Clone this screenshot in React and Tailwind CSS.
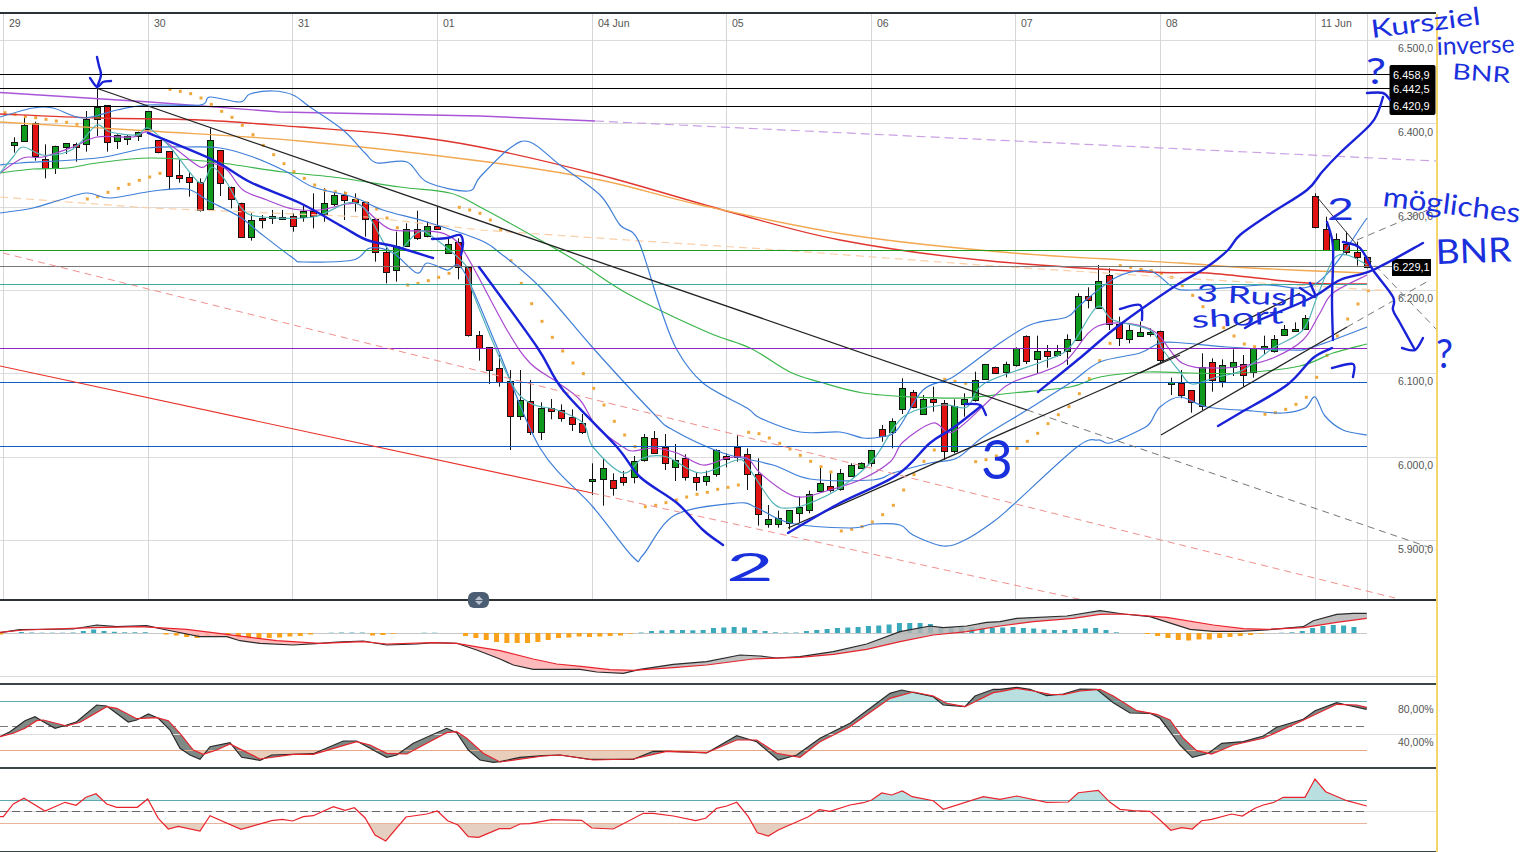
// Chart screen: price panel, MACD, stochastic and RSI panels, with pen annotations on top
const X = (i) => 3.7 + 10.33 * i;

// candles: [zoom x, high, low, body top, body bottom, red?] grouped by the crop origin they were read from
const candleGroups = [
  [0, 0, [
    [41,412,458,427,434,0],[72,345,425,376,422,0],[104,365,482,368,467,1],[135,433,535,477,503,1],[165,437,522,439,503,0],
    [197,430,462,430,440,0],[228,428,485,433,440,1],[258,333,455,358,432,0],[290,265,408,320,358,0],[320,316,455,316,425,1],
    [351,403,447,406,424,0],[382,405,435,409,418,0],[413,395,423,397,407,0],[444,333,392,334,386,0],[475,420,460,421,455,1],
    [507,453,570,454,527,1],[537,480,548,526,533,1],[568,518,590,532,545,1],[600,535,635,547,630,1],[630,385,630,421,628,0],
    [661,450,588,451,550,1],[692,560,625,562,596,1],[723,608,710,610,710,1],[754,640,722,661,712,0],[785,645,685,655,661,1],
    [816,630,672,648,655,0],[847,630,660,651,658,0],[878,640,695,649,677,1],[909,617,665,634,652,0],[940,580,685,634,648,1],
    [971,565,665,610,643,0],[1002,575,618,586,613,0],[1033,575,660,586,601,1],[1064,580,635,597,607,1],[1095,605,710,607,658,1],
    [1126,655,785,658,757,1],[1157,740,850,757,815,1],[1188,695,845,737,811,0],[1219,670,738,686,737,0],[1250,632,720,686,713,1],
    [1281,665,712,677,709,0],[1312,620,690,679,686,1],
  ]],
  [440, 240, [
    [24,-8,40,13,38,0],[54,-5,118,5,82,1],[85,82,290,82,285,1],[117,273,362,286,324,1],[147,322,432,322,389,1],[178,345,440,385,425,1],
    [209,390,630,424,527,1],[240,390,540,481,527,0],[271,420,585,484,575,1],[302,487,600,505,575,0],[333,477,538,505,512,1],
    [363,493,545,511,533,1],[395,508,573,532,551,1],[426,522,582,550,576,1],[457,670,765,718,724,0],[488,655,797,685,718,0],
    [519,700,767,721,743,1],[550,693,737,712,725,1],[581,648,730,664,712,0],[612,582,665,590,660,0],[642,573,642,595,640,1],
    [674,582,690,622,670,1],[705,612,723,660,680,0],[736,643,722,655,712,1],[767,698,752,712,725,1],[798,692,737,709,722,0],
    [828,628,710,631,703,0],[859,640,682,649,656,1],[890,586,665,620,650,1],[921,625,750,643,703,1],[953,655,857,703,821,1],
    [984,795,863,838,851,0],[1015,812,863,835,853,0],[1046,810,868,811,848,0],
  ]],
  [780, 240, [
    [56,770,848,800,818,0],[87,752,820,763,811,0],[119,680,752,730,752,0],[149,700,757,739,749,1],[180,687,752,700,748,0],
    [212,670,710,676,707,0],[242,667,685,668,683,0],[273,630,680,631,668,0],[305,555,605,568,587,1],[336,535,625,544,577,0],
    [367,415,522,445,506,0],[398,450,505,457,502,1],[429,465,525,478,521,0],[459,440,515,478,485,1],[491,480,660,490,632,1],
    [521,478,640,499,632,0],[552,460,530,477,493,0],[585,395,485,421,479,0],[615,372,420,373,418,0],[645,380,400,380,398,1],
    [677,365,412,373,395,0],[708,322,380,323,375,0],[738,286,372,287,364,1],[770,287,400,334,358,0],[801,315,383,332,349,1],
    [831,315,350,332,346,0],[862,283,375,296,334,0],[893,160,302,169,301,0],[924,142,205,169,181,1],[955,75,204,124,203,0],
    [986,85,270,106,253,1],[1017,230,318,253,295,1],[1048,255,310,271,298,0],[1079,245,290,277,287,0],[1110,265,290,277,283,0],
    [1141,272,370,274,361,1],
  ]],
  [1140, 280, [
    [92,293,345,305,310,0],[123,270,355,308,344,1],[154,330,398,331,367,1],[185,220,390,262,377,0],[216,235,335,247,300,1],
    [247,238,322,254,304,0],[278,208,288,247,260,0],[309,225,320,253,284,1],[340,203,293,205,275,0],[371,167,225,197,204,0],
    [402,165,218,178,214,0],[433,135,165,148,165,0],[464,127,155,146,152,0],[495,105,150,115,146,0],
  ]],
  [1140, 0, [
    [526,580,685,587,680,1],[557,650,750,688,750,1],[588,700,750,718,750,0],[619,695,765,733,757,1],[650,725,797,757,772,1],[681,770,805,772,800,1],
  ]],
];

const snap = (v) => Math.round(v) + 0.5;

const candles = candleGroups.flatMap(([ox, oy, rows]) =>
  rows.map(([x, hi, lo, top, bot, red]) => ({
    x: Math.round(ox + x / 3) + 0.5,
    hi: oy + hi / 3,
    lo: oy + lo / 3,
    top: snap(oy + top / 3),
    bot: snap(oy + bot / 3),
    red,
  }))
);

const sar = [
  ...[[15,338],[45,343],[76,350],[107,353],[138,358],[169,363],[200,367],[231,373],[262,597],[293,590],[324,577],[355,565],[387,553],[418,541],[449,531],[480,520],[510,268],[541,274],[572,281],[603,294],[634,313],[665,334],[696,352],[727,376],[759,404],[790,436],[821,464],[852,491],[882,515],[913,535],[944,555],[975,571],[1006,575],[1037,580],[1068,597],[1099,608],[1130,627],[1161,654],[1192,683],[1223,855],[1254,850],[1285,842],[1316,832],[1347,820],[1378,622],[1409,630],[1440,640],[1471,660],[1502,690]].map(([x,y]) => [x/3,y/3]),
  ...[[213,62],[244,130],[275,191],[306,244],[337,292],[368,333],[399,369],[430,401],[461,445],[492,495],[523,544],[554,585],[585,620],[616,800],[647,796],[678,788],[709,780],[740,771],[771,763],[802,757],[833,748],[864,742],[895,735],[926,577],[957,581],[988,594],[1019,610],[1050,627],[1081,646],[1112,664],[1143,680]].map(([x,y]) => [440+x/3,240+y/3]),
  ...[[153,696],[184,873],[215,868],[246,860],[277,846],[308,824],[340,796],[371,750],[402,704],[432,664],[463,630],[494,418],[525,424],[557,430],[587,665],[618,659],[649,648],[680,637],[711,625],[742,604],[773,580],[804,551],[835,524],[867,500],[898,461],[928,416],[959,362],[990,310],[1021,77],[1052,82],[1083,89],[1114,93]].map(([x,y]) => [780+x/3,240+y/3]),
  ...[[3,808],[33,813],[64,820],[95,832],[127,857],[158,886]].map(([x,y]) => [1140+x/3,y/3]),
  ...[[189,80],[220,113],[251,143],[282,168],[313,192],[344,200],[375,403],[406,398],[437,388],[468,373],[499,352],[530,292],[561,226],[592,168],[623,117],[654,72],[685,32]].map(([x,y]) => [1140+x/3,280+y/3]),
];

const curves = {
  red: "0,114 100,118 200,120 300,127 400,135 480,147 600,175 730,212 840,240 980,260 1147,272 1207,273 1307,283 1367,284",
  orange: "0,122 150,131 300,141 480,161 600,180 700,205 850,235 1013,253 1180,263 1250,268 1367,273",
  green: "0,173 33,169 67,168 97,163 150,158 213,162 283,172 333,177 400,187 450,193 480,207 540,240 583,265 630,295 707,332 750,348 790,372 820,382 863,393 913,397 963,398 1013,393 1070,387 1100,377 1147,372 1190,373 1240,373 1300,366 1333,353 1367,344",
  bbUp: "0,117 33,108 53,108 83,118 117,110 147,105 200,105 210,97 240,102 250,94 273,91 293,95 310,107 343,130 365,153 377,163 407,162 427,182 468,191 480,177 510,148 530,142 560,165 600,195 620,225 638,240 660,307 677,350 703,383 747,408 760,418 800,432 840,432 863,438 880,437 897,430 923,390 953,377 993,348 1030,325 1067,317 1080,305 1117,277 1150,271 1173,287 1193,290 1263,285 1317,283 1367,218",
  bbMid: "0,165 20,163 97,158 147,148 187,147 220,148 253,157 287,172 313,187 353,197 383,210 427,222 480,240 500,253 540,287 593,348 653,413 673,430 723,453 773,465 810,479 873,480 893,473 930,463 957,458 983,437 1027,410 1070,383 1100,362 1140,353 1160,343 1183,343 1227,347 1290,350 1313,347 1367,327",
  bbLow: "0,213 33,208 60,200 87,193 110,198 153,191 187,189 207,200 240,217 260,233 293,258 303,262 353,260 370,248 393,253 417,273 427,263 447,270 463,270 497,347 540,448 593,507 633,557 643,555 675,515 737,503 757,508 790,523 850,528 873,524 900,525 913,535 943,546 965,540 993,522 1013,505 1077,447 1098,440 1110,443 1140,430 1150,423 1160,407 1180,397 1207,407 1253,411 1283,413 1305,408 1315,397 1325,416 1343,430 1367,435",
  purple: "0,173 23,158 43,157 73,147 97,137 133,137 148,132 173,147 200,167 210,163 227,170 243,190 267,200 293,209 320,210 347,204 360,205 377,220 393,230 427,231 447,235 465,253 507,330 530,363 557,382 580,400 597,427 623,447 633,451 653,448 677,453 703,465 727,458 747,458 760,473 787,493 803,497 823,492 860,480 890,462 903,442 933,423 953,432 993,397 1013,382 1063,363 1098,326 1150,329 1182,363 1217,368 1243,366 1273,358 1303,340 1320,313 1333,293 1367,275",
  cyan: "0,173 13,157 23,147 43,155 67,152 80,143 97,125 110,132 137,135 148,128 170,147 200,183 212,167 227,183 243,210 263,217 313,217 347,203 363,207 373,223 393,253 417,233 430,235 467,267 473,293 510,380 530,403 557,410 583,423 593,447 623,473 643,458 667,457 700,473 737,460 748,467 773,503 790,508 810,503 840,488 873,460 903,417 943,405 967,407 985,383 1047,360 1070,347 1097,307 1113,320 1150,330 1163,350 1180,372 1192,384 1217,377 1243,370 1273,348 1303,330 1317,297 1333,260 1347,255 1367,265",
};

const hist = [-1.5,0,1,0.5,0.3,0.3,0.3,0.5,2,3.5,2,1.2,0.7,0.7,0.8,0,-1.5,-2.5,-4,-5,-3,-3,-4,-6,-6,-5,-5,-4.5,-3.5,-3,-1.5,0,0.3,0.5,0.5,0.5,-2.5,-2,-0.7,0,0,0.3,0.3,0,0,-3,-5,-7,-9,-10,-10,-10,-9,-7,-5,-4.5,-3.5,-4,-3.5,-3,-2.5,-0.7,0.5,2,2.5,3,3,2.7,3,5,5.5,6,5.5,3,2,0.7,0.5,0.5,2,3,4,5,5.5,6,7,7.5,8.5,10,10,10,9,6,6,5.5,5.5,5,5,5.5,6,5,4.5,3.5,3,3,4,4.5,5,3,0.7,0,0,-1,-3,-5,-7,-7.5,-6.5,-6.5,-5,-4,-3,-2,-0.7,0,0.3,0.7,2,5,7,8,7.5,6];

// crops of the lower panels start at x 0, 500 and 1000, y 590
const stitch = (a, b, c) => [
  ...a.filter((p) => p[0] < 1500).map(([x, y]) => [x / 3, 590 + y / 3]),
  ...b.filter((p) => p[0] < 1500).map(([x, y]) => [500 + x / 3, 590 + y / 3]),
  ...c.map(([x, y]) => [1000 + x / 3, 590 + y / 3]),
];

const macdA = stitch(
  [[0,128],[60,119],[220,117],[290,105],[350,110],[440,107],[500,120],[600,140],[680,140],[720,152],[780,160],[880,165],[960,160],[1010,156],[1090,153],[1160,165],[1250,162],[1300,158],[1370,160],[1430,180]],
  [[0,207],[40,225],[100,238],[240,238],[290,246],[370,250],[420,238],[520,223],[620,215],[720,195],[780,198],[830,204],[900,200],[1000,185],[1100,162],[1200,125],[1290,108],[1330,113],[1400,108],[1460,97]],
  [[0,95],[50,85],[200,78],[300,62],[370,72],[450,80],[570,118],[640,124],[720,124],[800,120],[910,110],[940,92],[1010,73],[1060,70],[1100,70]]
);
const macdB = stitch(
  [[0,127],[70,120],[280,113],[420,110],[560,118],[680,133],[830,152],[960,160],[1090,155],[1160,162],[1300,158],[1370,160],[1440,172]],
  [[0,182],[100,207],[170,222],[250,230],[330,239],[400,241],[520,233],[620,225],[760,207],[900,202],[1000,193],[1100,178],[1200,155],[1300,135],[1400,125]],
  [[0,108],[100,95],[220,85],[300,73],[370,72],[500,82],[640,105],[730,116],[800,118],[910,113],[1010,97],[1100,85]]
);
const stochA = stitch(
  [[0,440],[30,425],[75,392],[105,380],[130,395],[165,415],[200,405],[230,395],[290,345],[320,348],[385,396],[410,390],[445,372],[475,385],[510,420],[540,475],[570,495],[600,508],[630,470],[690,458],[725,502],[780,511],[815,495],[940,491],[1030,453],[1070,453],[1160,502],[1190,495],[1240,460],[1340,415],[1370,428],[1405,480],[1440,510],[1480,517]],
  [[0,515],[60,502],[130,497],[180,495],[270,508],[400,508],[460,484],[510,484],[620,489],[710,437],[770,455],[835,510],[890,495],[960,445],[1050,400],[1170,310],[1205,300],[1300,320],[1330,345],[1395,350],[1425,318],[1480,298]],
  [[0,298],[50,292],[90,298],[140,317],[190,312],[240,297],[290,298],[340,338],[390,369],[450,370],[480,385],[510,425],[540,465],[577,502],[625,490],[665,460],[730,455],[790,438],[830,412],[910,388],[945,362],[1010,338],[1040,345],[1100,358]]
);
const stochB = stitch(
  [[0,440],[40,430],[75,415],[110,392],[130,390],[200,408],[240,397],[320,350],[350,355],[410,386],[470,383],[505,392],[540,430],[580,480],[610,493],[650,480],[690,462],[780,507],[880,493],[940,493],[1070,455],[1110,465],[1160,490],[1220,492],[1340,428],[1370,425],[1400,445],[1450,490]],
  [[0,516],[130,498],[180,495],[280,510],[400,507],[500,484],[620,488],[710,450],[770,450],[830,490],[900,502],[960,455],[1050,410],[1170,325],[1240,306],[1300,318],[1340,340],[1395,350],[1480,308]],
  [[0,305],[50,295],[100,303],[150,313],[190,314],[240,303],[300,298],[340,318],[410,362],[470,373],[510,390],[550,445],[590,482],[635,492],[700,465],[790,445],[900,395],[1010,343],[1070,345],[1100,352]]
);
const rsi = stitch(
  [[0,680],[10,680],[40,642],[72,625],[135,663],[195,637],[228,646],[258,622],[288,611],[320,642],[350,652],[412,652],[443,627],[475,685],[505,717],[535,709],[600,723],[630,677],[723,718],[815,692],[847,688],[878,693],[910,680],[940,677],[1000,650],[1035,661],[1063,653],[1095,683],[1125,735],[1157,753],[1218,681],[1280,672],[1312,663],[1343,692],[1374,705],[1405,740],[1436,742],[1498,716]],
  [[0,716],[30,716],[60,702],[90,701],[155,689],[245,691],[275,714],[340,717],[430,670],[460,670],[520,678],[587,692],[617,685],[650,655],[680,648],[710,637],[745,680],[772,728],[805,738],[835,720],[925,680],[958,659],[990,664],[1050,645],[1090,638],[1115,630],[1145,609],[1175,615],[1207,603],[1237,620],[1300,632],[1330,658],[1450,620]],
  [[0,628],[50,618],[140,637],[205,636],[235,608],[295,601],[330,637],[360,658],[400,662],[450,664],[480,690],[512,721],[545,713],[577,717],[605,692],[635,688],[695,672],[727,678],[765,655],[790,645],[822,637],[850,622],[915,622],[945,567],[977,605],[1040,632],[1100,648]]
);

const line = (p) => p.map(([x, y]) => `${x.toFixed(1)},${y.toFixed(1)}`).join(" ");

// catmull-rom through "x,y x,y" points so the curves do not look like straight segments
const smooth = (s) => {
  const p = s.split(" ").map((q) => q.split(",").map(Number));
  let d = `M${p[0][0]} ${p[0][1]}`;
  for (let i = 0; i < p.length - 1; i++) {
    const a = p[i - 1] || p[i];
    const b = p[i];
    const c = p[i + 1];
    const e = p[i + 2] || c;
    const c1x = b[0] + (c[0] - a[0]) / 6;
    const c1y = b[1] + (c[1] - a[1]) / 6;
    const c2x = c[0] - (e[0] - b[0]) / 6;
    const c2y = c[1] - (e[1] - b[1]) / 6;
    d += `C${c1x.toFixed(1)} ${c1y.toFixed(1)} ${c2x.toFixed(1)} ${c2y.toFixed(1)} ${c[0]} ${c[1]}`;
  }
  return d;
};

const at = (p, x) => {
  for (let i = 1; i < p.length; i++) {
    if (x <= p[i][0]) {
      const t = (x - p[i - 1][0]) / (p[i][0] - p[i - 1][0] || 1);
      return p[i - 1][1] + t * (p[i][1] - p[i - 1][1]);
    }
  }
  return p[p.length - 1][1];
};

// polygon between two y functions, sampled every pixel
const band = (top, bottom) => {
  const xs = Array.from({ length: 1368 }, (_, i) => i);
  const upper = xs.map((x) => [x, top(x)]);
  const lower = xs.map((x) => [x, bottom(x)]).reverse();
  return line([...upper, ...lower]);
};

const prices = [["6.500,0", 48], ["6.400,0", 132], ["6.300,0", 216], ["6.200,0", 298], ["6.100,0", 381], ["6.000,0", 465], ["5.900,0", 549]];
const days = [["29", 3.5], ["30", 148.5], ["31", 292.5], ["01", 437.5], ["04 Jun", 592.5], ["05", 726.5], ["06", 871.5], ["07", 1015.5], ["08", 1160.5], ["11 Jun", 1315.5]];
const gridY = [40.5, 123.5, 207.5, 290.5, 373.5, 457.5, 540.5];

function Panel({ top, height, children }) {
  return (
    <svg width="1436" height={height} viewBox={`0 ${top} 1436 ${height}`} className="block shrink-0">
      {children}
    </svg>
  );
}

function PricePanel() {
  return (
    <Panel top={14} height={585}>
      {gridY.map((y) => (
        <line key={y} x1="0" x2="1436" y1={y} y2={y} stroke="#dcdcdc" />
      ))}
      {[...days.map((d) => d[1]), 1367.5].map((x) => (
        <line key={x} x1={x} x2={x} y1="14" y2="600" stroke="#d6d6d6" />
      ))}
      {days.map(([t, x]) => (
        <text key={t} x={x + 5.5} y="27" className="fill-[#555] text-[10.5px] font-['Liberation_Sans']">{t}</text>
      ))}
      {prices.map(([t, y]) => (
        <text key={t} x="1398" y={y + 4} className="fill-[#555] text-[10.5px] font-['Liberation_Sans']">{t}</text>
      ))}

      {candles.map((c, i) => (
        <g key={i}>
          <line x1={c.x} x2={c.x} y1={c.hi} y2={c.lo} stroke="#111" />
          <rect x={c.x - 3} y={c.top} width="6" height={Math.max(c.bot - c.top, 2)} fill={c.red ? "#e21212" : "#0f9a1e"} stroke="#141414" />
        </g>
      ))}
      {sar.map(([x, y], i) => (
        <rect key={i} x={x - 1.5} y={y - 1.5} width="3" height="3" fill="#f0a83c" />
      ))}

      <polyline points="0,92.5 150,102 280,112 480,116 595,121" fill="none" stroke="#a855d8" strokeWidth="1.4" />
      <line x1="595" y1="121" x2="1436" y2="161" stroke="#c9a0e4" strokeWidth="1.2" strokeDasharray="9 5" />
      <polyline points="0,197 150,208 200,210 367,217 480,230 627,240 780,250 980,265 1180,278 1393,291" fill="none" stroke="#f8cfa8" strokeWidth="1.2" strokeDasharray="8 5" />
      <path d={smooth(curves.red)} fill="none" stroke="#e0352e" strokeWidth="1.4" />
      <path d={smooth(curves.orange)} fill="none" stroke="#f2a850" strokeWidth="1.4" />
      <path d={smooth(curves.green)} fill="none" stroke="#3ab54a" strokeWidth="1.2" />
      <path d={smooth(curves.bbUp)} fill="none" stroke="#3f7fd8" strokeWidth="1.2" />
      <path d={smooth(curves.bbMid)} fill="none" stroke="#3f7fd8" strokeWidth="1.2" />
      <path d={smooth(curves.bbLow)} fill="none" stroke="#3f7fd8" strokeWidth="1.2" />
      <path d={smooth(curves.purple)} fill="none" stroke="#a848d0" strokeWidth="1.2" />
      <path d={smooth(curves.cyan)} fill="none" stroke="#55b4b8" strokeWidth="1.2" />

      <line x1="0" x2="1390" y1="74.5" y2="74.5" stroke="#000" />
      <line x1="0" x2="1390" y1="88.5" y2="88.5" stroke="#000" />
      <line x1="0" x2="1390" y1="106.5" y2="106.5" stroke="#000" />
      <line x1="0" x2="1367" y1="250.5" y2="250.5" stroke="#1f9a22" />
      <line x1="0" x2="1392" y1="266.5" y2="266.5" stroke="#777" />
      <line x1="0" x2="1367" y1="284.5" y2="284.5" stroke="#3aa89c" />
      <line x1="0" x2="1367" y1="348.5" y2="348.5" stroke="#9020c4" />
      <line x1="0" x2="1367" y1="382.5" y2="382.5" stroke="#0f5cc4" />
      <line x1="0" x2="1367" y1="446.5" y2="446.5" stroke="#0f5cc4" />

      {/* trend channels */}
      <line x1="96" y1="88" x2="1027" y2="410" stroke="#222" strokeWidth="1.3" />
      <line x1="1027" y1="410" x2="1437" y2="550" stroke="#777" strokeDasharray="7 5" />
      <line x1="788" y1="528" x2="1180" y2="355" stroke="#222" strokeWidth="1.3" />
      <polyline points="1161,435 1347,327" fill="none" stroke="#222" strokeWidth="1.3" />
      <line x1="1347" y1="327" x2="1430" y2="280" stroke="#777" strokeDasharray="7 5" />
      <line x1="1140" y1="373" x2="1300" y2="293" stroke="#222" strokeWidth="1.3" />
      <line x1="1357" y1="240" x2="1435" y2="207" stroke="#777" strokeDasharray="7 5" />
      <line x1="1317" y1="197" x2="1367" y2="257" stroke="#333" />
      <line x1="1367" y1="257" x2="1437" y2="330" stroke="#777" strokeDasharray="7 5" />
      <line x1="0" y1="366" x2="592" y2="493" stroke="#e8342c" strokeWidth="1.2" />
      <line x1="592" y1="493" x2="1083" y2="600" stroke="#ef8f8c" strokeDasharray="7 5" />
      <line x1="3" y1="253" x2="1395" y2="598" stroke="#ef8f8c" strokeDasharray="7 5" />

      <rect x="1389.5" y="65" width="46" height="50" rx="2" fill="#000" />
      <text x="1393" y="79" className="fill-white text-[11px] font-['Liberation_Sans']">6.458,9</text>
      <text x="1393" y="93" className="fill-white text-[11px] font-['Liberation_Sans']">6.442,5</text>
      <text x="1393" y="110" className="fill-white text-[11px] font-['Liberation_Sans']">6.420,9</text>
      <rect x="1392" y="259" width="39" height="17" fill="#000" />
      <text x="1393" y="271" className="fill-white text-[11px] font-['Liberation_Sans']">6.229,1</text>
    </Panel>
  );
}

function MacdPanel() {
  const a = (x) => at(macdA, x);
  const b = (x) => at(macdB, x);
  return (
    <Panel top={601} height={82}>
      <line x1="0" x2="1436" y1="676.5" y2="676.5" stroke="#dcdcdc" />
      <line x1="0" x2="1367" y1="633.5" y2="633.5" stroke="#c8c8c8" />
      {hist.map((v, i) => (
        <rect
          key={i}
          x={X(i) - 5.5}
          y={v > 0 ? 633 - v : 633}
          width="5"
          height={Math.abs(v)}
          fill={v > 0 ? "#3aa9bb" : "#f9a11b"}
        />
      ))}
      <polygon points={band(a, (x) => Math.max(a(x), b(x)))} fill="#b4b4b4" fillOpacity="0.85" />
      <polygon points={band(b, (x) => Math.max(a(x), b(x)))} fill="#ffb3b5" fillOpacity="0.9" />
      <polyline points={line(macdA)} fill="none" stroke="#2a2a2a" strokeWidth="1.2" />
      <polyline points={line(macdB)} fill="none" stroke="#e8232c" strokeWidth="1.2" />
    </Panel>
  );
}

function StochPanel() {
  const a = (x) => at(stochA, x);
  const b = (x) => at(stochB, x);
  const hi = 701.5;
  const lo = 750.5;
  return (
    <Panel top={685} height={82}>
      <polygon points={band((x) => Math.min(b(x), hi), () => hi)} fill="#b9dfe1" />
      <polygon points={band(() => lo, (x) => Math.max(b(x), lo))} fill="#e9cfbb" />
      <polygon points={band((x) => Math.min(a(x), b(x)), (x) => Math.max(a(x), b(x)))} fill="#7f8a86" />
      <line x1="0" x2="1436" y1="734.5" y2="734.5" stroke="#dcdcdc" />
      <line x1="0" x2="1367" y1={hi} y2={hi} stroke="#5fa9b0" />
      <line x1="0" x2="1367" y1="726.5" y2="726.5" stroke="#777" strokeDasharray="8 4" />
      <line x1="0" x2="1367" y1={lo} y2={lo} stroke="#e8a98a" />
      <polyline points={line(stochA)} fill="none" stroke="#2a2a2a" strokeWidth="1.2" />
      <polyline points={line(stochB)} fill="none" stroke="#e8232c" strokeWidth="1.2" />
      <text x="1398" y="713" className="fill-[#555] text-[10.5px] font-['Liberation_Sans']">80,00%</text>
      <text x="1398" y="746" className="fill-[#555] text-[10.5px] font-['Liberation_Sans']">40,00%</text>
    </Panel>
  );
}

function RsiPanel() {
  const r = (x) => at(rsi, x);
  const hi = 800.5;
  const lo = 823.5;
  return (
    <Panel top={769} height={82}>
      <polygon points={band((x) => Math.min(r(x), hi), () => hi)} fill="#b9dfe1" />
      <polygon points={band(() => lo, (x) => Math.max(r(x), lo))} fill="#e5cfc0" />
      <line x1="0" x2="1436" y1="811.5" y2="811.5" stroke="#dcdcdc" />
      <line x1="0" x2="1367" y1={hi} y2={hi} stroke="#5fa9b0" />
      <line x1="0" x2="1367" y1="811.5" y2="811.5" stroke="#666" strokeDasharray="8 4" />
      <line x1="0" x2="1367" y1={lo} y2={lo} stroke="#e8b49a" />
      <polyline points={line(rsi)} fill="none" stroke="#e8232c" strokeWidth="1.2" />
    </Panel>
  );
}

const pen = [
  "97,57 99,66 101,75 97,87",
  "90,78 97,87 103,82 111,81",
  "148,133 213,160 250,182 300,203 343,227 367,240 397,247 433,258",
  "432,239 447,238 460,235 463,243 461,255",
  "479,267 537,347 563,390 617,447 640,477 677,503 703,530 723,545",
  "788,533 840,503 897,475 930,443 953,428 980,407",
  "965,404 980,405 986,415",
  "1038,392 1080,358 1113,330 1150,303 1180,283 1207,267 1228,250 1240,235 1270,214 1307,190 1322,172 1340,153 1370,125 1378,112 1383,97",
  "1367,93 1383,93 1390,100",
  "1120,309 1140,305 1142,320",
  "1245,328 1260,320 1313,297 1340,280 1373,270 1423,243",
  "1300,288 1315,297 1310,283",
  "1327,222 1333,247 1332,300 1333,340",
  "1343,242 1360,248 1373,270 1393,297 1393,310 1400,323 1415,350",
  "1402,348 1415,350 1423,338",
  "1218,426 1240,413 1287,385 1313,358 1332,348",
  "1332,368 1353,364 1353,377",
];

const notes = [
  { t: "Kursziel", x: 1372, y: 38, w: 110, size: 25, rot: -7 },
  { t: "inverse", x: 1437, y: 55, w: 78, size: 25, rot: -2 },
  { t: "BNR", x: 1452, y: 79, w: 58, size: 22, rot: 4 },
  { t: "mögliches", x: 1382, y: 206, w: 138, size: 28, rot: 7 },
  { t: "BNR", x: 1436, y: 264, w: 76, size: 34, rot: -2 },
  { t: "3 Rush", x: 1196, y: 301, w: 112, size: 24, rot: 3 },
  { t: "short", x: 1192, y: 328, w: 92, size: 24, rot: -3 },
  { t: "?", x: 1366, y: 84, w: 20, size: 36, rot: 0 },
  { t: "?", x: 1436, y: 368, w: 17, size: 40, rot: 0 },
  { t: "2", x: 726, y: 581, w: 48, size: 38, rot: 0 },
  { t: "3", x: 981, y: 479, w: 32, size: 54, rot: 0 },
  { t: "2", x: 1327, y: 220, w: 27, size: 30, rot: 0 },
];

export default function App() {
  return (
    <div className="relative h-[852px] w-[1521px] overflow-hidden bg-white">
      <div className="h-3 w-[1436px]" />
      <div className="h-0.5 w-[1436px] bg-[#2b3136]" />
      <div className="flex w-[1438px] flex-col border-r-2 border-[#f4d66a]">
        <PricePanel />
        <div className="h-0.5 bg-[#2b3136]" />
        <MacdPanel />
        <div className="h-0.5 bg-[#3c4547]" />
        <StochPanel />
        <div className="h-0.5 bg-[#3c4547]" />
        <RsiPanel />
        <div className="h-px bg-[#3c4547]" />
      </div>

      {/* pen annotations over the chart */}
      <svg width="1521" height="852" viewBox="0 0 1521 852" className="pointer-events-none absolute inset-0">
        {pen.map((p, i) => (
          <path key={i} d={smooth(p)} fill="none" stroke="#1a22d8" strokeWidth="2.4" strokeLinecap="round" strokeLinejoin="round" />
        ))}
        {notes.map((n, i) => (
          <text
            key={i}
            x={n.x}
            y={n.y}
            fontSize={n.size}
            textLength={n.w}
            lengthAdjust="spacingAndGlyphs"
            transform={`rotate(${n.rot} ${n.x} ${n.y})`}
            className="fill-[#1a30dc] font-['Lato']"
          >
            {n.t}
          </text>
        ))}
      </svg>

      {/* panel resize handle */}
      <div className="absolute left-[468px] top-[592px] flex h-4 w-[21px] flex-col items-center justify-center gap-px rounded-md bg-[#4a5d73]">
        <span className="h-0 w-0 border-x-[4px] border-b-[4px] border-x-transparent border-b-[#b9c3cf]" />
        <span className="h-0 w-0 border-x-[4px] border-t-[4px] border-x-transparent border-t-[#b9c3cf]" />
      </div>
    </div>
  );
}
